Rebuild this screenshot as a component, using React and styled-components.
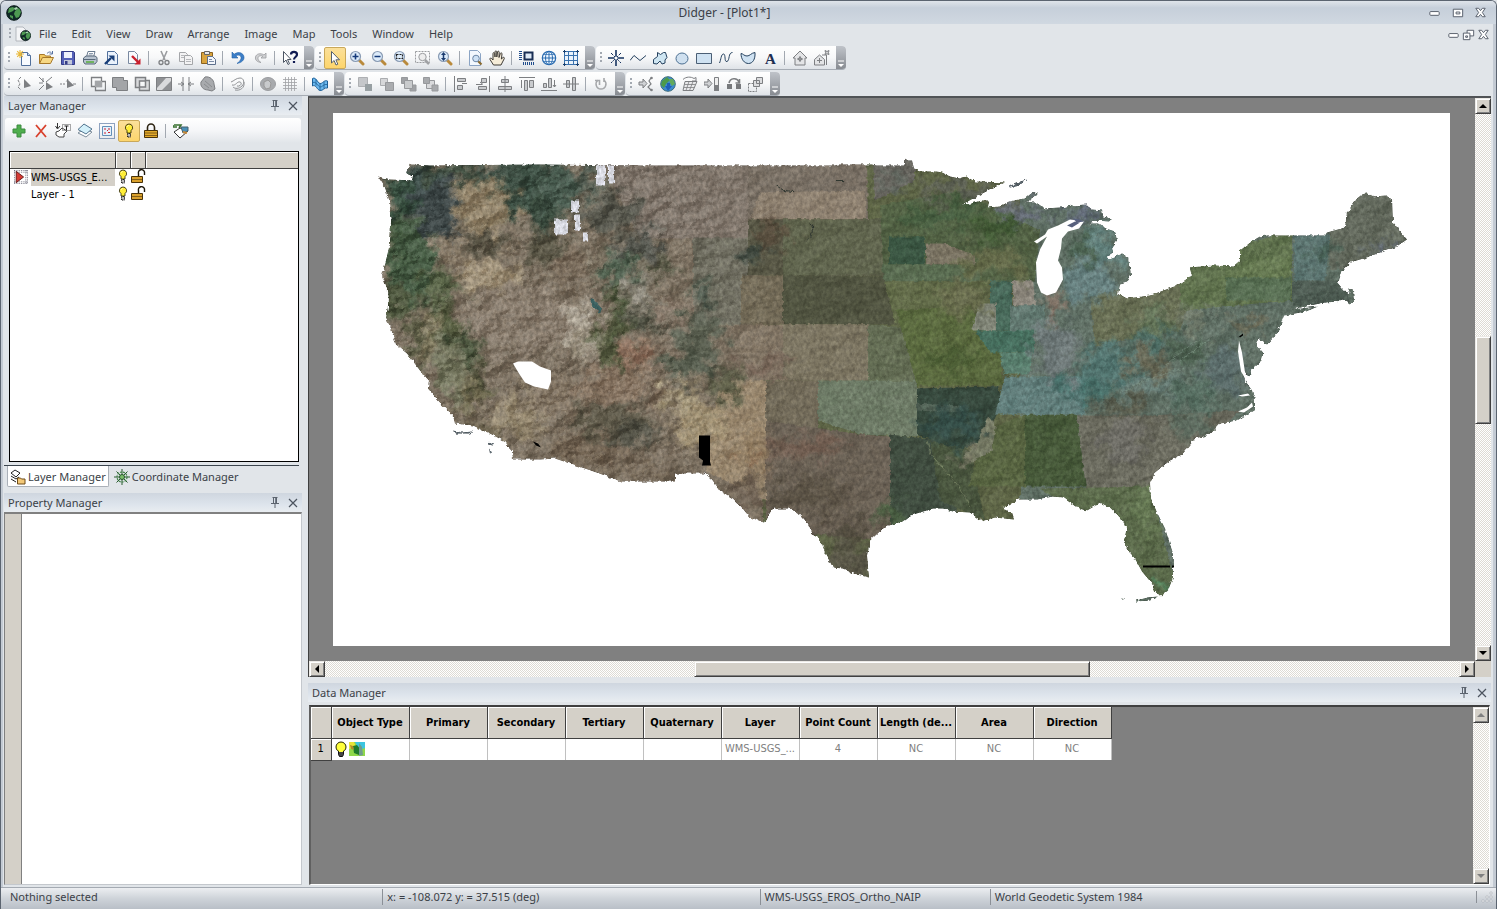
import styled, { createGlobalStyle, css } from 'styled-components'

const GlobalStyle = createGlobalStyle`
  * { box-sizing: border-box; }
  body {
    margin: 0;
    background: #e1e5e9;
    font-family: "Noto Sans", "DejaVu Sans", sans-serif;
    font-size: 11px;
    line-height: 16px;
    color: #3b3f47;
  }
  button {
    margin: 0;
    padding: 0;
    border: 0;
    background: none;
    font: inherit;
    color: inherit;
  }
  svg { display: block; }
`

const classic = '"DejaVu Sans Condensed", "DejaVu Sans", sans-serif'

const Window = styled.div`
  display: flex;
  flex-direction: column;
  min-height: 100vh;
  border: 1px solid #5b6470;
  border-bottom-width: 0;
  border-radius: 6px 6px 0 0;
  box-shadow: inset 2px 0 0 #c3cad3, inset -3px 0 0 #c3cad3;
`

const TitleBar = styled.header`
  display: flex;
  align-items: center;
  height: 23px;
  padding: 0 8px 0 5px;
  background: linear-gradient(#dfe4ea, #c6cfda 30%, #d0d8e1);
  border-radius: 5px 5px 0 0;
`

const Title = styled.h1`
  flex: 1;
  margin: 0;
  font-size: 12px;
  font-weight: 400;
  text-align: center;
`

const WindowButtons = styled.div`
  display: flex;
  gap: ${p => (p.$tight ? '0' : '8px')};
`

const MenuBar = styled.nav`
  display: flex;
  align-items: center;
  gap: 1px;
  height: 22px;
  padding: 0 5px 2px 8px;
`

const MenuItem = styled.button`
  padding: 0 7px;
`

const DocIcon = styled.span`
  padding: 0 0 0 3px;
`

const Spacer = styled.div`
  flex: 1;
`

const Grip = styled.span`
  width: ${p => (p.$menu ? '2px' : '9px')};
  height: 12px;
  background: radial-gradient(circle at 1px 1px, #a3a9b1 1px, transparent 1px) ${p => (p.$menu ? '0' : '4px')} 0 / 12px 4px;
`

const ToolRow = styled.div`
  display: flex;
  gap: 1px;
  margin: 0 4px 0 3px;

  & + & { margin-top: 2px; }
`

const ToolGroup = styled.div`
  display: flex;
  align-items: center;
  height: 24px;
  border-radius: 4px;
  border-bottom: 1px solid #a6acb4;
  background: linear-gradient(#ffffff, #f7f8f9 50%, #dfe3e8);
  overflow: hidden;
`

const ToolButton = styled.button`
  display: flex;
  align-items: center;
  justify-content: center;
  width: 22px;
  height: 22px;
  border: 1px solid transparent;
  border-radius: 2px;

  ${p => p.$active && css`
    border-color: #c9a85a;
    background: linear-gradient(#fbe09a, #fdd56c);
  `}
`

const Divider = styled.span`
  width: 1px;
  height: 14px;
  margin: 0 4px 0 3px;
  background: #a2a8b0;
`

const Tail = styled.button`
  display: flex;
  align-items: flex-end;
  width: 10px;
  height: 24px;
  margin-left: 3px;
  padding: 0 0 2px 1px;
  background: linear-gradient(#bfc3c9, #85898f);
`

const Workspace = styled.main`
  flex: 1;
  display: grid;
  grid-template-columns: 298px minmax(0, 1fr);
  gap: 6px;
  padding: 0 5px 2px 3px;
`

const SideBar = styled.aside`
  display: flex;
  flex-direction: column;
`

const PanelHead = styled.div`
  display: flex;
  align-items: center;
  gap: 2px;
  height: 19px;
  padding: 0 1px 0 4px;
  background: linear-gradient(#cfd6df, #dde4ec 60%, #e9edf1);

  h2 {
    flex: 1;
    margin: 0;
    font-size: 11px;
    font-weight: 400;
  }
`

const LayerTools = styled.div`
  display: flex;
  align-items: center;
  height: 25px;
  margin: 3px 1px 8px 1px;
  padding-left: 3px;
  border-radius: 3px;
  background: linear-gradient(#ffffff, #f5f6f8 50%, #e1e5e9);
`

const LayerBox = styled.div`
  height: 311px;
  margin: 0 3px 3px 5px;
  border: 1px solid #000;
  background: #fff;
`

const LayerTable = styled.table`
  width: 100%;
  table-layout: fixed;
  border-collapse: collapse;
  font-family: ${classic};
  color: #000;

  th {
    height: 16px;
    padding: 0;
    background: #d4d0c8;
    border-right: 1px solid #404040;
    border-bottom: 1px solid #404040;
    box-shadow: inset 1px 1px 0 #fff;
  }
  th:last-child { border-right: 0; }
  td {
    height: 17px;
    padding: 0;
  }
`

const LayerName = styled.div`
  display: grid;
  grid-template-columns: 14px 1fr;
  gap: 3px;
  align-items: center;
  padding-left: 4px;

  span {
    line-height: 17px;
    white-space: nowrap;
    background: ${p => (p.$selected ? '#d4d0c8' : 'none')};
  }
`

const Tabs = styled.div`
  display: flex;
  height: 22px;
  margin-right: 3px;
  border-top: 1px solid #3c454e;
`

const Tab = styled.button`
  display: flex;
  align-items: center;
  gap: 2px;
  height: 21px;
  margin-left: 3px;
  padding: 1px 2px 0 2px;

  ${p => p.$active && css`
    background: #fff;
    border: 1px solid #aab0b8;
    border-top: 0;
    border-radius: 0 0 2px 2px;
  `}
`

const PropertyBody = styled.div`
  flex: 1;
  border: 1px solid #c4c8cd;
  border-top: 2px solid #808080;
  border-left-color: #808080;
  background: linear-gradient(90deg, #d4d0c8 16px, #808080 16px, #808080 17px, #fff 17px);
`

const PropertyPanel = styled.section`
  flex: 1;
  display: flex;
  flex-direction: column;
  margin-top: 6px;
`

const Content = styled.div`
  display: flex;
  flex-direction: column;
  min-width: 0;
`

const MapFrame = styled.section`
  flex: 1;
  display: grid;
  grid-template-columns: minmax(0, 1fr) 16px;
  grid-template-rows: minmax(0, 1fr) 16px;
  border-top: 2px solid #505356;
  border-left: 1px solid #404040;
  background: #d4d0c8;
`

const Canvas = styled.div`
  display: flex;
  min-height: 0;
  padding: 15px 25px 15px 24px;
  background: #808080;

  svg {
    flex: 1;
    min-width: 0;
    background: #fff;
  }
`

const Scroll = styled.div`
  display: flex;
  flex-direction: ${p => (p.$vertical ? 'column' : 'row')};
  background: repeating-conic-gradient(#fff 0 25%, #dedbd4 0 50%) 0 0 / 2px 2px;
`

const raised = css`
  background: #d4d0c8;
  border: 1px solid #404040;
  border-top-color: #eceae6;
  border-left-color: #eceae6;
  box-shadow: inset 1px 1px 0 #fff, inset -1px -1px 0 #808080;
`

const ScrollButton = styled.button`
  display: flex;
  align-items: center;
  justify-content: center;
  width: 16px;
  height: 16px;
  ${raised}
`

const Track = styled.div`
  flex: 1;
  display: flex;
  flex-direction: ${p => (p.$vertical ? 'column' : 'row')};
  justify-content: center;
`

const Thumb = styled.div`
  ${p => (p.$vertical ? 'height: 88px;' : 'width: 35%;')}
  ${raised}
`

const DataPanel = styled.section`
  margin-top: 6px;
`

const DataBody = styled.div`
  display: grid;
  grid-template-columns: 1fr 16px;
  height: 180px;
  margin: 3px 1px 0 1px;
  border: 1px solid #fff;
  border-top: 2px solid #404040;
  border-left: 2px solid #606060;
  background: #808080;
`

const DataTable = styled.table`
  align-self: start;
  justify-self: start;
  width: 800px;
  table-layout: fixed;
  border-collapse: collapse;
  font-family: ${classic};
  text-align: center;

  th {
    height: 31px;
    padding: 2px 0 0;
    color: #000;
    font-weight: 700;
    white-space: nowrap;
    background: #d4d0c8;
    border-right: 1px solid #404040;
    border-bottom: 1px solid #404040;
    box-shadow: inset 1px 1px 0 #fff;
  }
  tbody th {
    height: 22px;
    padding: 0;
    font-weight: 400;
  }
  td {
    padding: 0;
    color: #808080;
    white-space: nowrap;
    background: #fff;
    border-right: 1px solid #c0c0c0;
  }
`

const ObjectIcons = styled.div`
  display: flex;
  padding-left: 1px;
`

const StatusBar = styled.footer`
  display: grid;
  grid-template-columns: 381fr 377fr 230fr 486fr 20px;
  align-items: center;
  height: 22px;
  padding-bottom: 3px;
  border-top: 1px solid #a4aab2;
  background: linear-gradient(#eceef1, #ced3d9 50%, #b9bfc7);

  span {
    padding-left: 4px;
    border-left: 1px solid #8b9097;
  }
  span:first-child {
    padding-left: 9px;
    border-left: 0;
  }
`

const g = '#7d7f82'
const lg = '#c9cbce'
const b = '#2b6cb0'
const ink = '#26425f'

const Lens = ({ children }) => (
  <>
    <path d="M10 10l4 4" stroke="#b98a3c" strokeWidth="3" strokeLinecap="round" />
    <circle cx="6.5" cy="6.5" r="5" fill="#dcebfa" stroke="#8a9cb4" strokeWidth="1.2" />
    {children}
  </>
)

const Globe = () => (
  <>
    <circle cx="8" cy="8" r="7.3" fill="#0f2b27" stroke="#0c1a1b" />
    <path d="M3 3l4-1 2 2-2 2-2 1-3 1zM9 6l4-3 2 4-2 5-3 1-2-4zM4 10l3 1 0 3-3-2z" fill="#4d9a52" />
    <path d="M8 3l3-1 1 2-3 1z" fill="#a8d5b0" />
  </>
)

const Bulb = () => (
  <>
    <path d="M8 1a3.600 3.600 0 0 0-2 6.600V10h4V7.600A3.600 3.600 0 0 0 8 1z" fill="#ffee38" stroke="#201c00" strokeWidth=".8" />
    <path d="M6.500 10.500h3v3.500h-3z" fill="#bbb" stroke="#111" strokeDasharray="1 .6" />
    <path d="M6.500 3.500l1-1" stroke="#fff" />
  </>
)

const Node = ({ d }) => <path d={d} fill="none" stroke={g} strokeWidth="1.2" />

const icons = {
  globe: <Globe />,
  doc: (
    <>
      <path d="M1 1h7l3 3v11H1z" fill="#f3f4f6" stroke="#b3b7bd" />
      <g transform="translate(5 4) scale(.7)"><Globe /></g>
    </>
  ),
  newFile: (
    <>
      <path d="M5.500 2.500h6l3 3v10h-9z" fill="#f8fbff" stroke="#51709c" />
      <path d="M11.500 2.500v3h3" fill="#c5d6ee" stroke="#51709c" />
      <path d="M4 0v8M0 4h8M1.200 1.200l5.600 5.600M6.800 1.200L1.200 6.800" stroke="#e8b83a" strokeWidth="1.1" />
    </>
  ),
  open: (
    <>
      <path d="M1.500 13.500v-9h5l1 1.500h5v2" fill="#f1c75f" stroke="#a6782a" />
      <path d="M1.500 13.500l3-6h11l-3 6z" fill="#f7d884" stroke="#a6782a" />
      <path d="M9 3.500c2-2 3.500-2 5 0M14.500 1v3h-3" fill="none" stroke="#5571a0" />
    </>
  ),
  save: (
    <>
      <path d="M1.500 1.500h12l1 1v12h-13z" fill="#5560b8" stroke="#343c86" />
      <path d="M4 2h8v6H4z" fill="#eef1fb" />
      <path d="M4 10h8v4.500H4z" fill="#c3c8da" />
      <path d="M5 11h2.500v3.500H5z" fill="#343c86" />
    </>
  ),
  print: (
    <>
      <path d="M4.500 7l1.500-5.500h7L11.500 7z" fill="#fff" stroke="#6b7c90" />
      <path d="M7 3.500h4M6.500 5h4" stroke="#8d9cae" />
      <path d="M1.500 8l2.500-2h9l2 1.500v4l-2 2.500h-10l-1.500-2z" fill="#b8c3cf" stroke="#58687a" />
      <path d="M2 9.500h11.500" stroke="#58687a" />
      <path d="M4 12h8" stroke="#6fb35f" strokeWidth="2" />
    </>
  ),
  importFile: (
    <>
      <path d="M3.500 1.500h7l3 3v10h-10z" fill="#eaf2fc" stroke="#51709c" />
      <path d="M1 14l6-6M7 8" stroke="#183e78" strokeWidth="2.400" />
      <path d="M4.500 5.500h6v6z" fill="#183e78" />
    </>
  ),
  exportFile: (
    <>
      <path d="M2.500 1.500h6l3 3v9h-9z" fill="#f8fafd" stroke="#7989a0" />
      <path d="M6 6l6 6" stroke="#c8202e" strokeWidth="2.400" />
      <path d="M14.500 8.500v6h-6z" fill="#c8202e" />
    </>
  ),
  cut: (
    <>
      <path d="M5 1l4 9M11 1L7 10" stroke="#9a9c9f" strokeWidth="1.600" />
      <circle cx="5" cy="12.500" r="2" fill="none" stroke={g} strokeWidth="1.300" />
      <circle cx="11" cy="12.500" r="2" fill="none" stroke={g} strokeWidth="1.300" />
    </>
  ),
  copy: (
    <>
      <path d="M1.500 2.500h6l2 2v7h-8z" fill="#f3f3f4" stroke="#a4a6a9" />
      <path d="M6.500 5.500h6l2 2v7h-8z" fill="#f3f3f4" stroke="#a4a6a9" />
      <path d="M3 5.500h3M3 7.500h3M8 9.500h5M8 11.500h5" stroke="#b6b8bb" />
    </>
  ),
  paste: (
    <>
      <path d="M1.500 2.500h11v11h-11z" fill="#d9a43e" stroke="#8a6220" />
      <path d="M4.500 1.500h5v3h-5z" fill="#e8e8ea" stroke="#666" />
      <path d="M7.500 6.500h5l3 3v5h-8z" fill="#f3f6fb" stroke="#5d6f8c" />
      <path d="M9 9.500h3M9 11.500h5" stroke="#7c8ca6" />
    </>
  ),
  undo: <path d="M2 2v6h6L5.800 5.800C9 4 11.500 6 11 8.500 10.600 10.500 9 12 7 13.500c5-1 7.300-3.500 7-6.500C13.500 3 8.500 1 4.200 4.200z" fill="#3d7fc8" stroke="#2461a6" strokeWidth=".6" />,
  redo: <path d="M14 3v5H9l1.800-1.900C8 5 5.500 6.500 6 9c.3 1.300 1.300 2.600 3 3.500-4-.5-6-2.500-5.500-5.500.6-3 4.700-4.500 8.500-2z" fill="#d0d1d3" stroke="#9a9c9f" strokeWidth=".8" />,
  help: (
    <>
      <path d="M1.500 1.500v11l2.500-2.500 2 4.500 1.500-.8-2-4.200H9z" fill="#fff" stroke="#4b5563" />
      <path d="M9 4.500C9 1 15 1 15 4.500c0 2.500-3 2.500-3 5M12 11v2" fill="none" stroke="#101b52" strokeWidth="2.200" />
    </>
  ),
  select: <path d="M4.500 1.500v11.500l2.600-2.500 1.900 4.500 1.800-.8-1.900-4.400h3.600z" fill="#fff" stroke="#55606d" />,
  zoomIn: <Lens><path d="M6.500 3.500v6M3.500 6.500h6" stroke="#143a7a" strokeWidth="1.600" /></Lens>,
  zoomOut: <Lens><path d="M3.500 6.500h6" stroke="#143a7a" strokeWidth="1.600" /></Lens>,
  zoomRect: <Lens><path d="M3.500 4.500h6v4h-6z" fill="none" stroke="#222" strokeWidth="1.200" strokeDasharray="2 1" /></Lens>,
  zoomSel: (
    <>
      <path d="M.5 1.500h14v11h-14z" fill="none" stroke="#9b9da0" strokeDasharray="2 1" />
      <path d="M10 10l4 4" stroke="#a0a2a5" strokeWidth="2.500" />
      <circle cx="7.500" cy="7" r="3.700" fill="#eee" stroke="#9b9da0" />
    </>
  ),
  zoomDyn: <Lens><path d="M6.500 4v5" stroke="#1b3c70" strokeWidth="1.500" /><path d="M4 5l2.500-3L9 5zM4 8l2.500 3L9 8z" fill="#1b3c70" /></Lens>,
  zoomPage: (
    <>
      <path d="M2.500.5h8l3 3v12h-11z" fill="#f3f8fe" stroke="#8ba4c4" />
      <path d="M11 11l3.500 3.500" stroke="#8a6a30" strokeWidth="2.200" />
      <circle cx="9" cy="8.500" r="3.300" fill="#cfe2f5" stroke="#6b86a6" />
    </>
  ),
  pan: <path d="M4.500 15L1 9.500c-.6-1.200.8-2 1.700-1L4 10V3.500c0-1.200 1.500-1.200 1.700 0L6 7V1.800c.1-1.200 1.700-1.200 1.800 0V7l.7-5c.2-1.200 1.700-1 1.700.2L10 7.500l1.300-4c.4-1.100 1.900-.7 1.700.5l-.6 5L14 7.500c1-.6 1.700.3 1.200 1.300L12 15z" fill="#f5ecd8" stroke="#3d3a35" />,
  ruler: (
    <>
      <path d="M5.500 2.500h8v7h-8z" fill="#dfeaf6" stroke="#1a2f55" strokeWidth="2" />
      <path d="M1.500 1v10M4 13.500h11" stroke="#1f4c8c" strokeWidth="3" strokeDasharray="1 1" />
    </>
  ),
  wire: (
    <>
      <circle cx="8" cy="8" r="6.700" fill="#eef6fe" stroke={b} strokeWidth="1.200" />
      <path d="M1 8h14M8 1v14" stroke={b} />
      <path d="M3 4.500h10M3 11.500h10" stroke={b} strokeWidth=".7" />
      <ellipse cx="8" cy="8" rx="3.500" ry="6.700" fill="none" stroke={b} />
    </>
  ),
  gridBlue: (
    <>
      <path d="M1.500 1.500h13v13h-13zM1.500 5.500h13M1.500 10.500h13M5.500 1.500v13M10.500 1.500v13" fill="#eaf3fc" stroke="#3a72ae" />
      <path d="M0 1.500h3M13 1.500h3M0 14.500h3M13 14.500h3M1.500 0v3M14.500 0v3M1.500 13v3M14.500 13v3" stroke="#173f70" />
    </>
  ),
  point: (
    <>
      <path d="M8 0v16M0 8h16" stroke="#16335f" strokeWidth="1.600" />
      <path d="M3 3l10 10M13 3L3 13" stroke="#16335f" strokeDasharray="3 1" />
      <circle cx="8" cy="8" r="1.500" fill="#fff" />
    </>
  ),
  polyline: <path d="M0 10.500l4-5 6 5 6-5" fill="none" stroke={ink} />,
  polygon: <path d="M1.500 13.500v-4l4-3v-4l3 2 3-2h2l1.500 5-2 2.500v3l-3 1-2-3-3 3z" fill="#cfe6f2" stroke={ink} />,
  ellipse: <ellipse cx="8" cy="8.500" rx="6" ry="5.500" fill="#cfe0ef" stroke="#4c6f91" />,
  rect: <path d="M.5 3.500h15v10H.5z" fill="#cfe2f2" stroke="#4b5f75" />,
  spline: <path d="M1.500 13C3 10 3 4 5.500 4S6 12.500 9 11.500 10 2.500 14.500 2.500" fill="none" stroke={ink} />,
  closedSpline: <path d="M1 3.500c2 0 3 2.500 6 2.500s4-3 8-3.500c.5 7-2.500 11-6.500 11S1 9.500 1 3.500z" fill="#cfe2f2" stroke={ink} />,
  text: <text x="3" y="14" fontFamily="Liberation Serif, serif" fontWeight="700" fontSize="15" fill="#1d2f52">A</text>,
  house: (
    <>
      <path d="M1 8l7-7 7 7h-2v7H3V8z" fill="#e3e4e6" stroke={g} />
      <path d="M8 6v6M5 9h6" stroke={g} /><circle cx="8" cy="9" r="1.500" fill="none" stroke={g} />
    </>
  ),
  houses: (
    <>
      <path d="M.5 15V9.500L5.500 5l5 4.500V15z" fill="#e3e4e6" stroke={g} />
      <path d="M5.500 8v5M3 10.500h5M8 5h4.500v10" stroke={g} fill="none" />
      <path d="M11 .5l2 1 2-1-.5 2 .5 2-2-.7-2 .7.500-2z" fill="#cfd0d2" stroke={g} />
    </>
  ),
  reshape: <><path d="M5 1L2 4l2 4-2 3 3 3" stroke={g} fill="none" strokeDasharray="3 1" /><path d="M8 3v9l7-2z" fill={g} /></>,
  breakLine: <><path d="M1 1l5 5M1 14l5-5M14 1L8 6M5 2v4M1 7h4" stroke={g} /><path d="M8 6v8l7-3z" fill={g} /></>,
  trim: <><path d="M0 8h6M8 3l-2 3" stroke={g} strokeDasharray="2 1" /><path d="M7 3v9l7-2.500z" fill={g} /><path d="M13 8h3" stroke={g} /></>,
  intersect: <><path d="M1.500 1.500h10v9h-10zM5.500 5.500h10v9h-10z" fill="none" stroke={g} strokeWidth="1.300" /><path d="M5 5h7v6H5z" fill="#a3a5a8" /></>,
  union: <path d="M.5 1.500h11v3h4v10h-11v-3h-4z" fill="#a3a5a8" stroke={g} />,
  subtract: <path d="M1.500 1.500h10v3h4v10h-10v-3h-4zM5.500 5h6v6h-6z" fill="#d9dadc" fillRule="evenodd" stroke={g} strokeWidth="1.500" />,
  divide: <><path d="M.5 1.500h15v13H.5z" fill="#d9dadc" stroke={g} /><path d="M1 2h9L1 12zM15 5v9H6z" fill="#8f9194" /></>,
  breakAt: <path d="M0 8h6M10 8h6M5 1v14M11 1v14M3 6l3 2-3 2M13 6l-3 2 3 2" stroke={g} fill="none" />,
  blob: <><path d="M5 1c5-1 9 3 9 7l1 5-3 2-4-1C3 14 0 10 1 6z" fill="#a8aaad" stroke={g} /><path d="M4 8l5 4M5 5l7 6" stroke="#8b8d90" /></>,
  swirl: <path d="M1 6c3-1 5-4 9-4s5 5 2 8-7 3-9 1M2 9c4 1 5-4 8-3s0 5-3 4M5 14c5 1 10-2 9-8" stroke="#8f9194" fill="none" />,
  disc: <><ellipse cx="8" cy="8" rx="7.500" ry="6.500" fill="#a8aaad" stroke="#9b9da0" /><path d="M4 6l4-2 3 3-1 5-4 1-2-3z" fill="#c8cacc" stroke="#999" /></>,
  gridGrey: <path d="M3.500 1v14M6.500 1v14M9.500 1v14M12.500 1v14M1 3.500h14M1 6.500h14M1 9.500h14M1 12.500h14" stroke="#9fa1a4" strokeWidth=".8" />,
  mesh: <><path d="M.5 2.500c3.500-2 5 4.500 7.500 5s4-4 7.500-2.500v7c-3-1-4.500 3-7.500 2.500S4 8 .5 10z" fill="#6cb8ee" stroke="#1d5f96" /><path d="M1 6.500c3-1.500 5 4 7 4.500s4-3.500 7-2.500M4 3.500v6M8 7.500v6.500M12 5.500v7" fill="none" stroke="#1d5f96" strokeWidth=".8" /></>,
  front: <><path d="M1.500 1.500h9v9h-9z" fill="#c5c7ca" stroke="#aeb0b3" /><path d="M8 8h7v7H8z" fill="#98a0a3" /></>,
  back: <><path d="M1.500 2.500h7v7h-7z" fill="#d6d7d9" stroke="#aaacaf" /><path d="M6.500 6.500h8v8h-8z" fill="#aaacaf" stroke="#97999c" /></>,
  forward: <><path d="M.5 1.500h6v6h-6zM9 9h6v6H9z" fill="#a0a2a5" stroke="#97999c" /><path d="M3.500 4.500h8v8h-8z" fill="#c9cbcd" stroke="#97999c" /></>,
  backward: <><path d="M3.500 4.500h8v8h-8z" fill="#d9dadc" stroke="#97999c" /><path d="M.5 1.500h6v6h-6zM9 9h6v6H9z" fill="#a8aaad" stroke="#97999c" /></>,
  alignLeft: <path d="M1.500 0v16M4.500 2.500h8v3h-8zM4.500 9.500h5v4h-5zM9 7.500h5" fill={lg} stroke={g} />,
  alignRight: <path d="M14.500 0v16M6.500 2.500h5v4h-5zM3.500 10.500h8v3h-8zM1 8.500h6M5 6l3 2.500" fill={lg} stroke={g} />,
  alignCenter: <path d="M8 0v16M4.500 3.500h7v3h-7zM1.500 10.500h13v3h-13z" fill={lg} stroke={g} />,
  alignTop: <path d="M0 1.500h16M2.500 4v8M5.500 4.500h3v10h-3zM10.500 4.500h4v7h-4z" fill={lg} stroke={g} />,
  alignBottom: <path d="M0 14.500h16M2.500 7.500h3v4h-3zM7.500 2.500h3v9h-3zM13.500 4v7M12 9l1.500 2L15 9" fill={lg} stroke={g} />,
  alignMiddle: <path d="M0 8h16M3.500 4.500h3v7h-3zM9.500 1.500h3v13h-3z" fill={lg} stroke={g} />,
  rotate: <path d="M5 4C1.500 7 3 13 8 13s6.500-6 3-9M2 4.500h4.500V9M11 2v4" fill="none" stroke="#a6a8ab" strokeWidth="1.600" />,
  georef: <><path d="M1 6h4V3l4 4.500L5 12V9H1z" fill="#d0d2d5" stroke={g} /><Node d="M13 2l-2 3 2 3-3 3 3 3" /><circle cx="13.500" cy="2" r="1.300" fill={g} /><circle cx="13.500" cy="14" r="1.300" fill={g} /></>,
  earthBlue: <><circle cx="8" cy="8" r="7.300" fill="#3d8bd0" stroke="#3b6a78" /><path d="M2 5l5-4 3 3-4 4-2 4-3-3z" fill="#4d9a4a" /><path d="M9 3h4l2 5-3 2-2-3z" fill="#62aa5c" /><path d="M7 7h3v3h2l-4 5-3-5h2z" fill="#1f5fb8" /></>,
  warp: <><path d="M3 5.500h12L11 14.500H1z" fill="#e9eaec" stroke={g} /><path d="M2.500 8.500h11M2 11.500h10.500M7 5.500l-3 9M11 5.500l-3.500 9" stroke={g} strokeWidth=".8" /><path d="M1 3.500c3-3 8-3 11-1l2-1v3.500h-4" fill="none" stroke={g} /></>,
  toBar: <><path d="M0 6h4V3l4 4.500L4 12V9H0z" fill="#d0d2d5" stroke={g} /><path d="M10.500 1.500h4v13h-4z" fill="#eee" stroke={g} /><path d="M10 9h5v6h-5z" fill={g} /></>,
  mosaic: <><path d="M1 8h5v5H1zM10 8h5v5h-5z" fill="#77797c" /><path d="M3 7c1-5 8-6 10-1M13.500 3v4h-4" fill="none" stroke={g} strokeWidth="1.600" /></>,
  tiles: <><path d="M.5 7.500h8v8h-8z" fill="none" stroke={g} strokeDasharray="2 1" /><path d="M5.500 4.500h6v6h-6zM8.500 1.500h6v6h-6z" fill="#dcdddf" stroke={g} /></>,
  add: <path d="M6 2h4v4h4v4h-4v4H6v-4H2V6h4z" fill="#4fae4d" stroke="#3c8a40" />,
  remove: <path d="M3 2l10 12M13 2L3 14" stroke="#d8402c" strokeWidth="1.800" />,
  placeText: <><path d="M2.500 0v5M.5 3l2 3 2.500-3" fill="none" stroke="#333" /><path d="M1 9l3-1 3-3 5 3-3 3v3H4L1 12z" fill="#fff" stroke="#333" strokeWidth=".9" /><path d="M7.500 1.500h8v6h-8z" fill="none" stroke="#555" strokeDasharray="1 1" /><path d="M9.500 3h4M11.500 3v4" stroke="#222" /></>,
  layers: <><path d="M1 10l6-4 8 3-6 5z" fill="#fff" stroke="#7d8d9b" /><path d="M1 6.500L7 1l8 5-6 5z" fill="#d3f0fa" stroke="#52738d" /></>,
  extent: <><path d="M.5.5h15v15H.5z" fill="none" stroke="#234a85" strokeDasharray="1 1" /><path d="M3.500 3.500h9v9h-9z" fill="#e6f1fb" stroke="#6390b8" /><path d="M5 6h2M9 6h2M5 10h2M9 9.500h2M8 7.500h1" stroke="#c23" /></>,
  bulb: <Bulb />,
  lock: <><path d="M4.500 8V4.500a3.500 3.500 0 0 1 7 0V8" fill="none" stroke="#2c2413" strokeWidth="1.600" /><path d="M1.500 7.500h13v7h-13z" fill="#e2a928" stroke="#4a3308" /><path d="M2 10h12M2 12.500h12" stroke="#85601a" /></>,
  unlock: <><path d="M8.500 7V4.500a3 3 0 0 1 6-1.500v3" fill="none" stroke="#1b1509" strokeWidth="1.400" /><path d="M1.500 7.500h11v6h-11z" fill="#d9a02c" stroke="#4a3308" /><path d="M2 10.500h10" stroke="#85601a" /></>,
  layerOpts: <><path d="M1 2h7l-2 3M0 2v2h4" stroke="#39702f" strokeWidth="1.600" fill="none" /><path d="M1 9l6-4 8 3-8 7z" fill="#fff" stroke="#333" /><path d="M8 4h7v4l-5 2z" fill="#4a90b8" stroke="#45606e" /><path d="M10 9l4 1" stroke="#c88834" strokeWidth="2" /></>,
  marker: <><path d="M0 .5h16M0 15.500h16M0 2.500h16M0 13.500h16M.5 0v16M13.500 0v16M15.500 0v16" stroke="#667" strokeDasharray="1 1" /><path d="M2.500 1.500L11 8l-8.500 6.500z" fill="#d53a35" stroke="#5c1514" /></>,
  tabLayer: <><path d="M1 4l4-3 5 3-4 4zM1 7l5 3 3-2M1 10l5 3" fill="#fff" stroke="#222" /><path d="M7.500 9h3l1 1h3.500v5H7.500z" fill="#f3c877" stroke="#6d4b18" /></>,
  tabCoord: <><path d="M8 0v16M0 8h16M2.500 2.500l11 11M13.500 2.500l-11 11" stroke="#28592f" /><circle cx="8" cy="8" r="5" fill="none" stroke="#3f8144" strokeWidth="1.200" strokeDasharray="2 1" /><circle cx="8" cy="8" r="2.500" fill="#7cbf6c" stroke="#28592f" /></>,
  bigBulb: <><circle cx="8" cy="6" r="5" fill="#ffff3c" stroke="#222200" /><path d="M5.500 10.500h5v3l-1 2h-3l-1-2z" fill="#444" stroke="#111" /><path d="M6 10.500h4" stroke="#ffff3c" /></>,
  raster: <><path d="M0 1h16v14H0z" fill="#8fd84a" /><path d="M6 1h10v6l-6 2z" fill="#3cc4e0" /><path d="M0 1h5l2 5-7 2z" fill="#e8e33a" /><path d="M4 5l4-1 4 5-2 5-5-2z" fill="#1e7a2b" /><path d="M10 2l3 4 1 8-4 1z" fill="#6f9b8e" /><path d="M1 4l3 1 1 4-3-1z" fill="#b08a2c" /></>,
  pin: <path d="M5.500 2.500h5M6.500 2.500v6M9.500 2.500v6M8.700 3v5M4 8.500h8M8 9v4" stroke="#5c646f" fill="none" />,
  close: <path d="M4 4l8 8M12 4l-8 8" stroke="#4c545f" strokeWidth="1.200" />,
  min: <rect x="3" y="7" width="10" height="4" rx="1" fill="#fff" stroke="#535b66" />,
  restore: <path d="M3.500 4.500h10v8h-10zM6.500 7.500h4v2h-4z" fill="#fff" stroke="#535b66" />,
  cascade: <><path d="M6.500 3.500h7v6h-7z" fill="#fff" stroke="#535b66" /><path d="M2.500 6.500h7v7h-7zM5 9.500h2v1.500H5z" fill="#fff" stroke="#535b66" /></>,
  shut: <path d="M3 3.500h3l2 2.500 2-2.500h3L10 8l3 4.500h-3L8 10l-2 2.500H3L6 8z" fill="#fff" stroke="#535b66" />,
}

const Icon = ({ name, size = 16 }) => (
  <svg width={size} height={size} viewBox="0 0 16 16" fill="none" aria-hidden="true">{icons[name]}</svg>
)

const Strip = ({ items, active }) => items.map((name, i) => (
  name === '|'
    ? <Divider key={i} />
    : <ToolButton key={i} aria-label={name} $active={name === active}><Icon name={name} /></ToolButton>
))

const Group = ({ items, active }) => (
  <ToolGroup>
    <Grip />
    <Strip items={items.split(' ')} active={active} />
    <Tail aria-label="More buttons">
      <svg width="8" height="8" viewBox="0 0 8 8"><path d="M1 1h6" stroke="#fff" /><path d="M1 4h6L4 7z" fill="#fff" /></svg>
    </Tail>
  </ToolGroup>
)

const arrows = {
  up: 'M0 6l4-4 4 4z',
  down: 'M0 2l4 4 4-4z',
  left: 'M6 0L2 4l4 4z',
  right: 'M2 0l4 4-4 4z',
}

const Arrow = ({ dir, off }) => (
  <ScrollButton aria-label={`Scroll ${dir}`} disabled={off}>
    <svg width="8" height="8" viewBox="0 0 8 8"><path d={arrows[dir]} fill={off ? '#808080' : '#000'} /></svg>
  </ScrollButton>
)

const ScrollBar = ({ vertical, off }) => (
  <Scroll $vertical={vertical}>
    <Arrow dir={vertical ? 'up' : 'left'} off={off} />
    <Track $vertical={vertical}>{!off && <Thumb $vertical={vertical} />}</Track>
    <Arrow dir={vertical ? 'down' : 'right'} off={off} />
  </Scroll>
)

const Head = ({ children }) => (
  <PanelHead>
    <h2>{children}</h2>
    <button aria-label="Pin"><Icon name="pin" /></button>
    <button aria-label="Close"><Icon name="close" /></button>
  </PanelHead>
)

const coast = `M378 176L390 179 412 180 413 175 406 172 411 164 430 165 540 164 640 165 835 165 838 164 872 164 875 165 905 165
 905 158 908 160 912 160 914 168 923 171 935 171 942 172 950 176 960 178 966 176 975 181 1005 182 990 189 975 197 962 204 972 203
 982 200 989 200 988 207 1000 206 1009 201 1024 198 1030 193 1038 192 1034 197 1026 202 1036 202 1045 208 1060 207 1073 205 1086 204
 1092 209 1102 210 1103 216 1112 218 1110 221 1096 220 1090 223 1098 223 1106 228 1115 231 1117 240 1112 247 1113 252 1107 256 1107 259
 1122 253 1128 257 1131 275 1127 282 1120 284 1118 293 1127 298 1150 295 1177 285 1192 275 1190 267 1215 265 1233 266 1240 260 1240 250
 1253 240 1260 236 1267 235 1283 235 1325 235 1327 232 1345 227 1347 212 1357 198 1362 194 1367 193 1374 196 1386 195 1392 199 1393 223
 1398 226 1400 231 1407 239 1395 247 1373 255 1360 259 1350 262 1344 268 1341 273 1338 283 1345 291 1351 293 1348 288 1353 289 1354 302
 1349 303 1343 299 1336 301 1325 302 1300 307 1292 309 1318 306 1306 311 1284 315 1281 323 1277 333 1267 344 1258 338 1257 345 1263 352
 1260 362 1251 370 1249 377 1244 370 1241 352 1239 350 1241 365 1245 380 1252 390 1255 400 1255 409 1237 420 1220 423 1210 434 1195 438
 1188 447 1182 454 1170 460 1155 472 1150 483 1151 498 1157 512 1165 528 1173 553 1173 577 1168 590 1161 596 1155 591 1152 583 1142 571
 1135 558 1129 551 1124 540 1127 527 1121 518 1110 507 1100 502 1094 506 1087 510 1077 507 1063 497 1053 496 1037 499 1018 499 1003 508
 1012 513 1014 519 995 517 982 521 970 512 953 511 943 508 933 508 910 515 904 520 883 528 870 540 867 555 869 577 853 573 843 568
 833 567 825 552 822 543 812 532 808 523 800 514 790 508 773 508 765 522 750 517 741 506 733 498 720 490 712 479 705 473 675 473 675 481
 622 481 588 469 555 458 540 459 513 459 512 450 505 441 490 433 473 425 455 423 453 415 440 402 428 388 429 380 420 370 414 362 407 353
 396 344 391 328 386 318 389 300 388 290 382 275 385 264 390 243 391 224 389 200 385 187z`

// sharp edged mosaic tiles, [fill, points]
const tiles = [
  ['#83776a', '600,160 748,160 748,238 640,238'],
  ['#7b7062', '748,160 867,160 868,219 748,219'],
  ['#8e7f6b', '760,192 865,190 866,219 750,219'],
  ['#66645c', '873,160 915,150 915,180 875,200'],
  ['#585742', '748,219 884,219 884,276 748,275'],
  ['#5f6549', '783,219 884,219 884,275 783,275'],
  ['#716f5f', '693,237 748,237 748,324 693,324'],
  ['#756b54', '741,275 785,275 785,324 741,324'],
  ['#51543d', '783,275 884,276 896,324 783,324'],
  ['#837561', '740,324 870,324 870,380 740,380'],
  ['#7c745d', '783,324 868,324 868,380 783,380'],
  ['#626d4f', '868,324 917,328 917,380 868,380'],
  ['#9a8668', '720,380 766,380 766,500 705,470'],
  ['#736a55', '766,380 818,380 818,435 766,435'],
  ['#6a7a61', '818,380 917,380 917,436 862,434 818,420'],
  ['#6b6051', '766,420 862,434 890,436 890,540 766,530'],
  ['#3e4e3e', '890,434 940,440 960,520 890,530'],
  ['#50623f', '880,205 960,190 1040,230 1035,280 884,280'],
  ['#36573f', '889,236 925,236 925,264 889,264'],
  ['#7b735f', '926,243 945,243 975,255 975,264 926,264'],
  ['#566c4c', '882,264 980,264 980,281 884,281'],
  ['#606b42', '884,281 990,281 975,310 960,330 896,324'],
  ['#586a37', '896,310 970,305 1000,350 1003,385 917,385'],
  ['#344a3c', '917,388 997,386 1003,400 985,440 960,450 917,434'],
  ['#4d6152', '917,403 960,405 960,412 917,410'],
  ['#47563a', '930,440 970,450 985,520 940,500'],
  ['#56653b', '985,430 1025,414 1025,486 968,486'],
  ['#445a34', '1025,414 1077,414 1086,486 1025,486'],
  ['#757a60', '988,416 996,425 992,450 972,462 964,455 978,440'],
  ['#426a57', '990,280 1012,280 1012,330 990,330'],
  ['#7d8272', '980,303 996,303 996,330 971,330'],
  ['#8c867a', '1012,280 1033,280 1036,305 1014,305'],
  ['#5f7a70', '1010,305 1045,305 1045,332 1010,332'],
  ['#40705c', '975,330 1034,330 1034,352 990,352'],
  ['#54806c', '1000,352 1032,352 1030,374 1004,374'],
  ['#5c7e7b', '1005,376 1085,376 1085,414 995,414'],
  ['#6b6b5c', '1077,415 1150,415 1240,410 1160,490 1086,488'],
  ['#596b45', '1040,488 1150,486 1180,600 1140,600 1090,520'],
  ['#687050', '1090,296 1200,270 1180,330 1095,345'],
  ['#5e7348', '1180,262 1292,230 1292,300 1180,310'],
  ['#62794a', '1250,258 1291,256 1291,276 1215,280'],
  ['#55704f', '1226,277 1291,277 1291,300 1226,300'],
  ['#587570', '1294,234 1330,234 1325,285 1294,285'],
  ['#4d5e53', '1292,280 1345,280 1350,305 1292,305'],
  ['#626a5b', '1327,180 1410,180 1410,262 1330,270'],
]

// soft terrain tones, [fill, cx, cy, rx, ry]
const terrain = [
  ['#2f4745', 415, 187, 28, 22], ['#344347', 440, 210, 24, 28], ['#2b4c3a', 400, 200, 16, 26],
  ['#34502f', 400, 250, 14, 34], ['#3b5a3c', 414, 262, 22, 42], ['#52633f', 440, 288, 20, 16],
  ['#354a3a', 455, 172, 36, 10], ['#958464', 487, 205, 32, 28],
  ['#2f4a3c', 530, 185, 26, 34], ['#2d4536', 548, 205, 18, 26], ['#3f5a4c', 560, 188, 18, 24],
  ['#334b3f', 500, 172, 26, 10], ['#4d5c50', 590, 180, 14, 16],
  ['#8d7e68', 470, 250, 32, 18], ['#504c3b', 480, 242, 26, 9], ['#a59475', 490, 275, 30, 16],
  ['#55523f', 545, 248, 22, 16], ['#7b6b57', 575, 265, 24, 14], ['#525449', 610, 215, 34, 18],
  ['#847a66', 600, 258, 20, 9], ['#4c5048', 640, 247, 28, 14], ['#48604b', 620, 275, 16, 22],
  ['#4d523c', 660, 268, 16, 7], ['#8f8b7c', 640, 292, 18, 14], ['#435544', 700, 280, 10, 5],
  ['#8b7d6b', 520, 320, 60, 34], ['#b5ac9b', 580, 320, 14, 22], ['#a69c88', 590, 345, 20, 14],
  ['#465434', 400, 305, 16, 18], ['#4a5732', 440, 325, 12, 22], ['#3f5032', 462, 350, 14, 24],
  ['#8a8261', 430, 333, 7, 24], ['#73775a', 450, 368, 13, 30], ['#77714f', 470, 395, 12, 18],
  ['#4a4d31', 480, 375, 6, 24], ['#55593c', 415, 345, 8, 24], ['#9a8b6d', 520, 415, 26, 22],
  ['#6b6146', 480, 430, 28, 7], ['#857560', 560, 395, 30, 22], ['#8a735d', 615, 385, 34, 20],
  ['#94705a', 640, 355, 20, 14], ['#4d5634', 610, 340, 12, 26], ['#404f2e', 617, 310, 9, 28],
  ['#4f5343', 645, 318, 26, 10], ['#5b5643', 610, 420, 40, 14], ['#4c4d40', 635, 435, 24, 9],
  ['#75644f', 590, 450, 40, 18], ['#786955', 640, 465, 28, 12], ['#4f5a48', 690, 365, 26, 12],
  ['#58604f', 700, 335, 24, 22], ['#8b7a68', 668, 310, 16, 10], ['#3e5143', 704, 302, 8, 7],
  ['#a89a77', 680, 395, 20, 14], ['#6d5844', 657, 395, 5, 16], ['#a5936f', 700, 425, 28, 20],
  ['#55583e', 725, 385, 12, 20], ['#927a5a', 755, 450, 14, 20], ['#6d5e4d', 750, 488, 16, 18],
  ['#8a6448', 752, 460, 8, 5], ['#37453c', 754, 252, 14, 8], ['#5a4c39', 772, 235, 16, 16],
  ['#795f50', 805, 447, 36, 10], ['#766051', 760, 368, 22, 9], ['#4f4939', 850, 535, 20, 14],
  ['#5b5141', 810, 495, 40, 14], ['#5b5646', 850, 565, 24, 18], ['#47603c', 895, 515, 14, 10], ['#42603c', 940, 215, 40, 12],
  ['#3b5a2c', 1000, 225, 26, 10], ['#5c5f55', 960, 188, 40, 8], ['#666f66', 895, 178, 14, 8],
  ['#6a7080', 1025, 212, 24, 10],
  ['#656b43', 990, 262, 34, 14], ['#648485', 1090, 280, 26, 20], ['#5f8581', 1100, 245, 20, 20],
  ['#46624c', 1082, 248, 10, 14], ['#5f6488', 1085, 211, 22, 5], ['#6f7b7c', 1055, 350, 20, 36],
  ['#8a7263', 1052, 302, 8, 14], ['#4b7772', 1110, 365, 30, 20], ['#3c6d66', 1085, 390, 26, 12],
  ['#426a61', 1152, 340, 18, 12], ['#6a664f', 1150, 362, 20, 10], ['#48604c', 1190, 350, 20, 14],
  ['#534f3c', 1125, 405, 24, 6], ['#65807a', 1150, 385, 34, 7], ['#727c68', 1190, 320, 24, 10],
  ['#6e6850', 1250, 322, 18, 8], ['#5a6f6e', 1225, 370, 22, 22], ['#4f6c5d', 1195, 395, 20, 18],
  ['#6b6a62', 1125, 440, 24, 22], ['#56695a', 1190, 425, 20, 12], ['#5f7453', 1150, 320, 14, 14],
  ['#3e5a4c', 1325, 252, 8, 12], ['#5b6692', 1382, 251, 14, 3], ['#667d50', 1145, 510, 9, 22],
  ['#807c68', 965, 458, 9, 6], ['#696d48', 962, 300, 22, 14], ['#475c2c', 950, 360, 24, 10],
  ['#3aa06a', 1162, 590, 7, 4], ['#31504a', 955, 425, 28, 14],
]

const UsMap = () => (
  <svg viewBox="333 113 1117 532" role="img" aria-label="Map">
    <defs>
      <clipPath id="land"><path d={coast} /></clipPath>
      <linearGradient id="fadeEast" x1="380" x2="1180" gradientUnits="userSpaceOnUse">
        <stop offset="0" stopColor="#fff" />
        <stop offset=".36" stopColor="#ddd" />
        <stop offset=".52" stopColor="#555" />
        <stop offset="1" stopColor="#777" />
      </linearGradient>
      <mask id="reliefMask"><rect x="370" y="150" width="1050" height="460" fill="url(#fadeEast)" /></mask>
      <filter id="soft" x="-10%" y="-10%" width="120%" height="120%" colorInterpolationFilters="sRGB">
        <feTurbulence type="fractalNoise" baseFrequency=".06" numOctaves="5" seed="8" result="n" />
        <feGaussianBlur in="SourceGraphic" stdDeviation="4" result="s" />
        <feDisplacementMap in="s" in2="n" scale="46" xChannelSelector="R" yChannelSelector="G" />
      </filter>
      <filter id="rough" x="333" y="113" width="1117" height="532" filterUnits="userSpaceOnUse" colorInterpolationFilters="sRGB">
        <feTurbulence type="fractalNoise" baseFrequency=".25" numOctaves="2" seed="3" result="j" />
        <feDisplacementMap in="SourceGraphic" in2="j" scale="4" xChannelSelector="R" yChannelSelector="G" result="land" />
        <feTurbulence type="fractalNoise" baseFrequency=".3 .22" numOctaves="3" seed="21" />
        <feColorMatrix values="1.5 .3 0 0 -.4  1.5 .3 0 0 -.4  1.5 .3 0 0 -.4  0 0 0 0 1" result="t" />
        <feComposite in="land" in2="t" operator="arithmetic" k1=".3" k2=".87" />
        <feColorMatrix type="saturate" values=".82" />
      </filter>
      <filter id="relief" x="370" y="150" width="1050" height="460" filterUnits="userSpaceOnUse" colorInterpolationFilters="sRGB">
        <feTurbulence type="fractalNoise" baseFrequency=".04 .065" numOctaves="4" seed="14" />
        <feColorMatrix values="0 0 0 0 0  0 0 0 0 0  0 0 0 0 0  1 0 0 0 0" />
        <feDiffuseLighting surfaceScale="9" diffuseConstant=".78" lightingColor="#fff">
          <feDistantLight azimuth="215" elevation="40" />
        </feDiffuseLighting>
      </filter>
    </defs>
    <g filter="url(#rough)">
      <g clipPath="url(#land)">
        <rect x="333" y="113" width="430" height="532" fill="#7f725f" />
        <rect x="763" y="113" width="260" height="532" fill="#5b643f" />
        <rect x="1020" y="113" width="430" height="532" fill="#5d7063" />
        {tiles.map(([fill, points]) => <polygon key={points} fill={fill} points={points} />)}
        <g filter="url(#soft)" opacity=".88">
          {terrain.map(([fill, cx, cy, rx, ry]) => (
            <ellipse key={`${cx}-${cy}`} fill={fill} cx={cx} cy={cy} rx={rx} ry={ry} />
          ))}
        </g>
        <g mask="url(#reliefMask)" opacity=".5" style={{ mixBlendMode: 'soft-light' }}>
          <rect x="370" y="150" width="1050" height="460" filter="url(#relief)" />
        </g>
        <path d="M596 165h9v20h-9zM608 165h6v18h-6zM554 219h14v15h-14zM575 214h5v16h-5zM583 232h5v9h-5zM571 200h8v12h-8z" fill="#d3d4de" />
        <path d="M590 298l4 2 8 8-2 5-6-5z" fill="#33605f" />
        <path d="M810 222l3 6-2 8-4 4M776 185l8 5 10 1M836 180h8" stroke="#30372f" fill="none" />
        <path d="M927 440l4 14 14 16 14 16 12 20" stroke="#7d8a62" fill="none" opacity=".6" />
        <path d="M1120 392l30-14 34-10M1165 365l26-22 16-6M1180 360l30-22" stroke="#84a08f" fill="none" opacity=".4" />
      </g>
      <path d="M1009 186l8-4 10-3-8 6-9 2zM454 430l8 2 11-1-3 2-14 0zM488 441l6 2-1 2-5-1zM489 448l3 4-2 1z" fill="#55626b" />
      <path d="M1136 600l12-3 10-1-8 4-14 1zM1122 597l3 1-2 1z" fill="#556b5c" />
    </g>
    <g fill="#fff">
      <path d="M1084 221L1070 219 1058 225 1048 229 1045 234 1034 241 1037 243 1047 236 1040 249 1036 262 1037 282 1041 292 1047 295 1056 292 1063 279 1062 267 1058 260 1061 248 1062 238 1068 231 1079 228z" />
      <path d="M513 363l5-2h14l8 5 11 4v11l-3 8-14-3-9-4-6-9z" />
      <path d="M1239 340l3 12 2 13 2 14-5-8-3-20zM1238 395l10-2 2 2-8 1zM1238 411l9-4 5-5 1 4-9 6z" />
    </g>
    <path d="M1067 225l8-4 5 1-8 5zM1073 218l6 1 5 2-7 1z" fill="#57607c" />
    <path d="M699 435h11v26l1 4h-9l1-5-4-3z" />
    <path d="M1143 565h27v2h-27zM1172 565h2v2h-2zM533 441l5 2 3 4-5-2zM1239 336l4-3v2l-3 2z" />
  </svg>
)

const layers = [
  { name: 'WMS-USGS_E...', selected: true },
  { name: 'Layer - 1' },
]

const columns = ['Object Type', 'Primary', 'Secondary', 'Tertiary', 'Quaternary', 'Layer', 'Point Count', 'Length (de...', 'Area', 'Direction']
const values = ['', '', '', '', 'WMS-USGS_...', '4', 'NC', 'NC', 'NC']
const menus = ['File', 'Edit', 'View', 'Draw', 'Arrange', 'Image', 'Map', 'Tools', 'Window', 'Help']

const App = () => {
  return (
    <>
      <GlobalStyle />
      <Window>
        <TitleBar>
          <Icon name="globe" />
          <Title>Didger - [Plot1*]</Title>
          <WindowButtons>
            <button aria-label="Minimize"><Icon name="min" size={15} /></button>
            <button aria-label="Restore"><Icon name="restore" size={15} /></button>
            <button aria-label="Close window"><Icon name="shut" size={15} /></button>
          </WindowButtons>
        </TitleBar>
        <MenuBar>
          <Grip $menu />
          <DocIcon><Icon name="doc" /></DocIcon>
          {menus.map(m => <MenuItem key={m}>{m}</MenuItem>)}
          <Spacer />
          <WindowButtons $tight>
            <button aria-label="Minimize plot"><Icon name="min" size={15} /></button>
            <button aria-label="Restore plot"><Icon name="cascade" size={15} /></button>
            <button aria-label="Close plot"><Icon name="shut" size={15} /></button>
          </WindowButtons>
        </MenuBar>

        <ToolRow>
          <Group items="newFile open save print importFile exportFile | cut copy paste | undo redo | help" />
          <Group items="select zoomIn zoomOut zoomRect zoomSel zoomDyn | zoomPage pan | ruler wire gridBlue" active="select" />
          <Group items="point polyline polygon ellipse rect spline closedSpline text | house houses" />
        </ToolRow>
        <ToolRow>
          <Group items="reshape breakLine trim | intersect union subtract divide breakAt blob | swirl | disc gridGrey | mesh" />
          <Group items="front back forward backward | alignLeft alignRight alignCenter alignTop alignBottom alignMiddle | rotate" />
          <Group items="georef earthBlue warp toBar mosaic tiles" />
        </ToolRow>

        <Workspace>
          <SideBar>
            <Head>Layer Manager</Head>
            <LayerTools>
              <Strip items={['add', 'remove', 'placeText', 'layers', 'extent', 'bulb', 'lock', '|', 'layerOpts']} active="bulb" />
            </LayerTools>
            <LayerBox>
              <LayerTable>
                <colgroup>
                  <col width="105" /><col width="15" /><col width="15" /><col />
                </colgroup>
                <thead>
                  <tr><th /><th /><th /><th /></tr>
                </thead>
                <tbody>
                  {layers.map(l => (
                    <tr key={l.name}>
                      <td>
                        <LayerName $selected={l.selected}>
                          {l.selected ? <Icon name="marker" size={14} /> : <i />}
                          <span>{l.name}</span>
                        </LayerName>
                      </td>
                      <td><Icon name="bulb" /></td>
                      <td><Icon name="unlock" /></td>
                      <td />
                    </tr>
                  ))}
                </tbody>
              </LayerTable>
            </LayerBox>
            <Tabs>
              <Tab $active><Icon name="tabLayer" />Layer Manager</Tab>
              <Tab><Icon name="tabCoord" />Coordinate Manager</Tab>
            </Tabs>
            <PropertyPanel>
              <Head>Property Manager</Head>
              <PropertyBody />
            </PropertyPanel>
          </SideBar>

          <Content>
            <MapFrame>
              <Canvas><UsMap /></Canvas>
              <ScrollBar vertical />
              <ScrollBar />
            </MapFrame>
            <DataPanel>
              <Head>Data Manager</Head>
              <DataBody>
                <DataTable>
                  <colgroup>
                    <col width="20" />
                    {columns.map(c => <col key={c} width="78" />)}
                  </colgroup>
                  <thead>
                    <tr><th />{columns.map(c => <th key={c}>{c}</th>)}</tr>
                  </thead>
                  <tbody>
                    <tr>
                      <th>1</th>
                      <td><ObjectIcons><Icon name="bigBulb" /><Icon name="raster" /></ObjectIcons></td>
                      {values.map((v, i) => <td key={i}>{v}</td>)}
                    </tr>
                  </tbody>
                </DataTable>
                <ScrollBar vertical off />
              </DataBody>
            </DataPanel>
          </Content>
        </Workspace>

        <StatusBar>
          <span>Nothing selected</span>
          <span>x: = -108.072 y: = 37.515 (deg)</span>
          <span>WMS-USGS_EROS_Ortho_NAIP</span>
          <span>World Geodetic System 1984</span>
          <span>
            <svg width="12" height="12" viewBox="0 0 12 12"><path d="M9 1h2v2H9zM5 5h2v2H5zM9 5h2v2H9zM1 9h2v2H1zM5 9h2v2H5zM9 9h2v2H9z" fill="#f4f6f8" stroke="#a0a6ae" strokeWidth=".5" /></svg>
          </span>
        </StatusBar>
      </Window>
    </>
  )
}

export default App
